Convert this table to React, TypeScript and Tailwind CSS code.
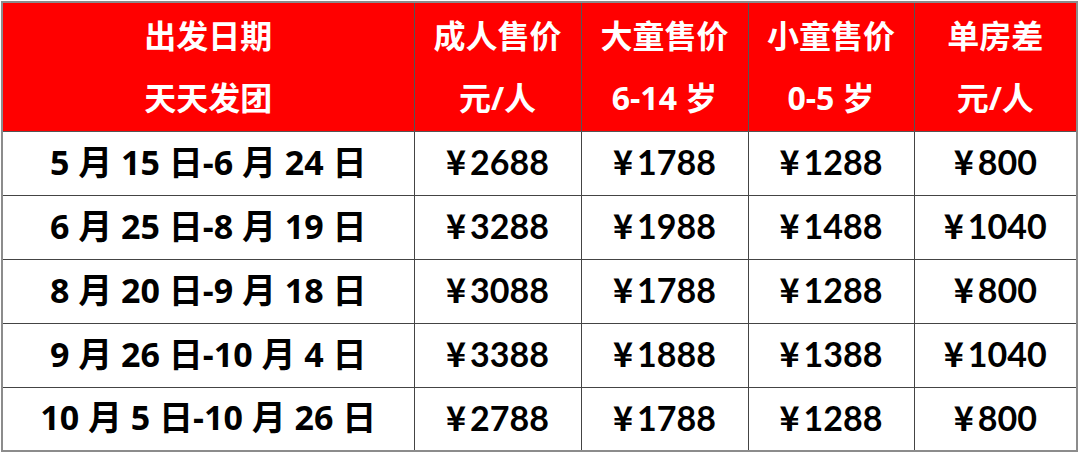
const header = [
  ['出发日期', '天天发团'],
  ['成人售价', '元/人'],
  ['大童售价', '6-14 岁'],
  ['小童售价', '0-5 岁'],
  ['单房差', '元/人'],
]

const rows = [
  ['5 月 15 日-6 月 24 日', '¥2688', '¥1788', '¥1288', '¥800'],
  ['6 月 25 日-8 月 19 日', '¥3288', '¥1988', '¥1488', '¥1040'],
  ['8 月 20 日-9 月 18 日', '¥3088', '¥1788', '¥1288', '¥800'],
  ['9 月 26 日-10 月 4 日', '¥3388', '¥1888', '¥1388', '¥1040'],
  ['10 月 5 日-10 月 26 日', '¥2788', '¥1788', '¥1288', '¥800'],
]

const widths = ['w-[412px]', 'w-[167px]', 'w-[167px]', 'w-[166px]', 'w-auto']

export default function App() {
  return (
    <div className="w-[1080px] h-[454px] bg-white pt-px pl-px" style={{ fontFamily: 'Lato, "Noto Sans CJK SC", sans-serif' }}>
      <table className="w-[1077px] border-collapse border-2 border-[#8c8c8c] table-fixed font-bold">
        <thead>
          <tr className="bg-[#ff0000] text-white h-[129px]">
            {header.map((h, i) => (
              <th
                key={i}
                className={`${widths[i]} border border-[#555] p-0 text-[32px] leading-[62px] font-bold font-['Open_Sans','Noto_Sans_CJK_SC',sans-serif]`}
              >
                <div>{h[0]}</div>
                <div>{h[1]}</div>
              </th>
            ))}
          </tr>
        </thead>
        <tbody>
          {rows.map((r, ri) => (
            <tr key={ri} className="h-[64px] text-black">
              {r.map((c, ci) => (
                <td
                  key={ci}
                  className={`border border-[#444] p-0 pb-[3px] text-center leading-none ${
                    ci === 0 ? "text-[34px] font-['Open_Sans','Noto_Sans_CJK_SC',sans-serif]" : 'text-[34px]'
                  }`}
                >
                  {c.startsWith('¥') ? (
                    <>
                      <span className="mr-[4px] font-['Noto_Sans_CJK_SC',sans-serif]">¥</span>
                      {c.slice(1)}
                    </>
                  ) : (
                    c
                  )}
                </td>
              ))}
            </tr>
          ))}
        </tbody>
      </table>
    </div>
  )
}
